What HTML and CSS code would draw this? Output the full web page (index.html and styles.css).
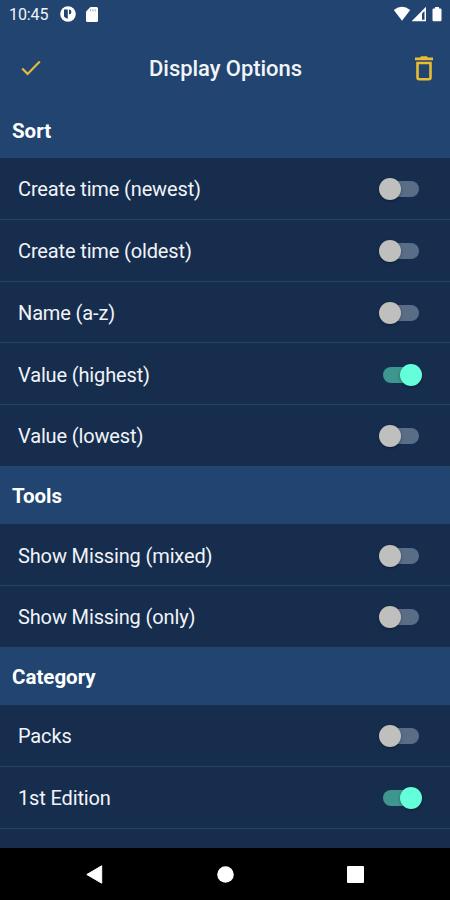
FILE: index.html
```html
<!DOCTYPE html>
<html lang="en">
<head>
<meta charset="utf-8">
<title>Display Options</title>
<link rel="stylesheet" href="styles.css">
</head>
<body>
<div class="screen">
  <div class="status">
    <span class="time">10:45</span>
    <svg class="badge-icon" width="16" height="16" viewBox="0 0 16 16"><circle cx="8" cy="8" r="7.8" fill="#fff"/><path d="M4 3.500H7.800V12.700A5 5 0 0 1 4 10.500z" fill="#214471"/><path d="M9 3.500a2.400 2.400 0 0 1 0 4.800z" fill="#214471"/></svg>
    <svg class="card-icon" width="12" height="15" viewBox="0 0 12 15"><path d="M4.500 0H10.500Q12 0 12 1.500V13.500Q12 15 10.500 15H1.500Q0 15 0 13.500V4.500z" fill="#fff"/><path d="M4.500 2v2.500M6.900 2v2.500M9.200 2v2.500" stroke="#a5b3c8"/></svg>
    <span class="spacer"></span>
    <svg class="system-icons" width="50" height="16" viewBox="0 0 50 16"><path d="M.8 4Q9 -2.500 17.200 4L9 14.700z" fill="#fff"/><path d="M33 .8V15.200H18.600z" fill="#fff"/><path d="M31.500 5V13.800H29V7.500z" fill="#214471"/><path d="M42 1h4v1.500h1.300q1.200 0 1.200 1.200V14q0 1.200-1.200 1.200h-6.600q-1.200 0-1.200-1.200V3.700q0-1.200 1.200-1.200H42z" fill="#fff"/></svg>
  </div>
  <header class="bar">
    <svg width="20" height="16" viewBox="0 0 20 16"><path d="M1.200 8.500L6.600 13.900L18.800 1.500" fill="none" stroke="#e4b93c" stroke-width="2.200"/></svg>
    <h1>Display Options</h1>
    <svg width="18" height="25" viewBox="0 0 18 25"><path d="M0 1.500H5L6.200 .3H11.800L13 1.500H18V4.200H0z" fill="#e9bc32"/><path d="M2.500 7H15.500V21.500Q15.500 23.200 13.800 23.200H4.200Q2.500 23.200 2.500 21.500z" fill="none" stroke="#e9bc32" stroke-width="2.600"/></svg>
  </header>
  <main>
    <h2 class="first">Sort</h2>
    <div class="row"><span>Create time (newest)</span><i class="switch"></i></div>
    <div class="row"><span>Create time (oldest)</span><i class="switch"></i></div>
    <div class="row"><span>Name (a-z)</span><i class="switch"></i></div>
    <div class="row"><span>Value (highest)</span><i class="switch on"></i></div>
    <div class="row"><span>Value (lowest)</span><i class="switch"></i></div>
    <h2>Tools</h2>
    <div class="row"><span>Show Missing (mixed)</span><i class="switch"></i></div>
    <div class="row"><span>Show Missing (only)</span><i class="switch"></i></div>
    <h2>Category</h2>
    <div class="row"><span>Packs</span><i class="switch"></i></div>
    <div class="row"><span>1st Edition</span><i class="switch on"></i></div>
  </main>
  <nav>
    <svg width="17" height="19" viewBox="0 0 17 19"><path d="M.8 9.500L15.700 .8V18.200z" fill="#fff" stroke="#fff" stroke-linejoin="round"/></svg>
    <svg width="17" height="17" viewBox="0 0 17 17"><circle cx="8.500" cy="8.500" r="8.300" fill="#fff"/></svg>
    <svg width="17" height="17" viewBox="0 0 17 17"><rect width="17" height="17" rx="1" fill="#fff"/></svg>
  </nav>
</div>
</body>
</html>
```
FILE: styles.css
```css
* { box-sizing: border-box; }
body { margin: 0; font-family: Roboto, sans-serif; color: #f1f4f8; background: #214471; }
svg { display: block; flex: none; }
h1, h2 { margin: 0; }
.screen { height: 900px; display: flex; flex-direction: column; overflow: hidden; }
.status { height: 28px; flex: none; display: flex; align-items: center; padding: 0 7px 0 9px; }
.time { font-size: 16px; line-height: 28px; width: 51px; padding-top: 1px; letter-spacing: -.1px; }
.card-icon { margin-left: 10px; }
.spacer { flex: 1; }
.bar { height: 80px; flex: none; display: flex; align-items: center; justify-content: space-between; padding: 0 17px 0 21px; }
h1 { font-size: 22px; font-weight: 500; line-height: 28px; letter-spacing: -.05px; padding: 2px 5px 0 0; }
main { flex: 1; min-height: 0; background: #162d4e; }
h2 { height: 57.4px; padding-left: 12px; background: #214471; color: #fff; font-size: 20.5px; font-weight: 700; line-height: 59px; }
h2.first { height: 50px; line-height: 46px; }
.row { height: 61.75px; display: flex; align-items: center; justify-content: space-between; padding: 2px 27px 0 18px; border-bottom: 1px solid #294361; font-size: 20px; letter-spacing: -.14px; }
.switch { position: relative; width: 44px; height: 22px; }
.switch::before { content: ""; position: absolute; left: 4px; top: 3px; width: 36px; height: 16px; border-radius: 8px; background: #5a6d87; }
.switch::after { content: ""; position: absolute; left: 0; top: 0; width: 22px; height: 22px; border-radius: 50%; background: #bfbfbd; box-shadow: 0 1px 3px rgba(0, 0, 0, .35); }
.switch.on::before { background: #3d978f; }
.switch.on::after { left: 21px; background: #64ffda; }
nav { height: 52px; flex: none; display: flex; align-items: center; justify-content: space-between; padding: 0 86px; background: #000; }
```
